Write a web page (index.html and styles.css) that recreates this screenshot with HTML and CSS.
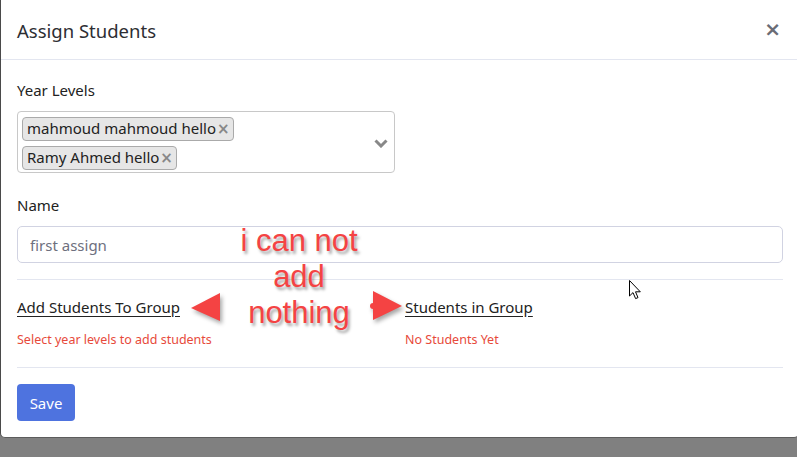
FILE: index.html
```html
<!DOCTYPE html>
<html>
<head>
<meta charset="utf-8">
<link rel="stylesheet" href="styles.css">
</head>
<body>
<div class="modal">
  <div class="modal-header">
    <h5 class="modal-title">Assign Students</h5>
    <button class="close" type="button">×</button>
  </div>
  <div class="modal-body">
    <label class="lbl">Year Levels</label>
    <div class="select">
      <div class="tags">
        <span class="tag">mahmoud mahmoud hello<span class="tag-x">×</span></span>
        <span class="tag">Ramy Ahmed hello<span class="tag-x">×</span></span>
      </div>
      <svg class="chev" width="14" height="9" viewBox="0 0 14 9"><polyline points="1.5,1.5 7,7 12.5,1.5" fill="none" stroke="#888" stroke-width="3"/></svg>
    </div>
    <label class="lbl lbl-name">Name</label>
    <input class="input" type="text" placeholder="first assign">
    <hr class="sep sep1">
    <div class="cols">
      <div class="col">
        <a class="col-title">Add Students To Group</a>
        <p class="hint">Select year levels to add students</p>
      </div>
      <div class="col">
        <a class="col-title">Students in Group</a>
        <p class="hint">No Students Yet</p>
      </div>
    </div>
    <hr class="sep sep2">
    <button class="btn" type="button">Save</button>
  </div>
</div>

<div class="note">i can not<br>add<br>nothing</div>
<svg class="arrow arrow-left" width="34" height="32" viewBox="0 0 34 32"><polygon points="2,16 31,1 31,29" fill="#f44343"/></svg>
<svg class="arrow arrow-right" width="40" height="34" viewBox="0 0 40 34"><polygon points="34,17 5,2 5,31" fill="#f44343"/><circle cx="5" cy="17" r="3" fill="#f44343"/></svg>
<svg class="cursor" width="14" height="21" viewBox="0 0 14 21"><path d="M0.5,0.5 L0.5,16 L4,12.6 L6.6,18.6 L9,17.6 L6.5,11.8 L11.3,11.8 Z" fill="#fff" stroke="#000" stroke-width="1" stroke-linejoin="miter"/></svg>
</body>
</html>
```
FILE: styles.css
```css
html, body {
  margin: 0;
  padding: 0;
  overflow: hidden;
}
body {
  background: #808080;
  width: 797px;
  height: 457px;
  position: relative;
  font-family: "Noto Sans", "Open Sans", sans-serif;
  color: #222;
}
.modal {
  width: 798px;
  background: #fff;
  border-left: 1px solid #4a4a4a;
  border-bottom: 1px solid #5c5c5c;
  border-radius: 0 0 5px 5px;
}
.modal-header {
  height: 59px;
  border-bottom: 1px solid #e3e6f0;
  display: flex;
  align-items: center;
  justify-content: space-between;
  padding: 0 16px;
}
.modal-title {
  margin: 2px 0 0 0;
  font-size: 18.5px;
  font-weight: 400;
  color: #2d2e33;
}
.close {
  border: 0;
  background: none;
  padding: 0;
  margin: 0 2px 2px 0;
  font-family: "DejaVu Sans", sans-serif;
  font-size: 20px;
  font-weight: 700;
  line-height: 1;
  color: #6b6c75;
}
.modal-body {
  padding: 18px 16px 16px;
}
.lbl {
  display: block;
  font-size: 15px;
  line-height: 24px;
  margin-bottom: 9px;
}
.lbl-name {
  margin-top: 20px;
}
.select {
  box-sizing: border-box;
  width: 378px;
  height: 62px;
  border: 1px solid #c8c8c8;
  border-radius: 4px;
  display: flex;
  align-items: center;
  justify-content: space-between;
  padding: 0 6px 0 4px;
}
.tags {
  display: flex;
  flex-direction: column;
  align-items: flex-start;
  gap: 5px;
  padding-top: 3px;
}
.tag {
  background: #e6e6e6;
  border: 1px solid #aaa;
  border-radius: 4px;
  font-size: 15px;
  line-height: 21px;
  padding: 0 3px 0 4px;
  color: #222;
  white-space: nowrap;
}
.tag-x {
  font-family: "DejaVu Sans", sans-serif;
  font-weight: 700;
  color: #888;
  font-size: 15px;
  margin-left: 1px;
}
.chev {
  display: block;
  margin-top: 2px;
}
.input {
  display: block;
  box-sizing: border-box;
  width: 766px;
  height: 37px;
  border: 1px solid #d1d3e2;
  border-radius: 5px;
  padding: 0 12px;
  font-family: inherit;
  font-size: 15px;
  color: #333;
  margin: 0;
}
.input::placeholder {
  color: #6e707e;
}
.sep {
  border: 0;
  border-top: 1px solid #e3e6f0;
  margin: 0;
}
.sep1 {
  margin-top: 16px;
}
.cols {
  display: grid;
  grid-template-columns: 388px 1fr;
  padding-top: 15px;
}
.col-title {
  display: inline-block;
  font-size: 15px;
  line-height: 24px;
  color: #222;
  text-decoration: underline;
  text-underline-offset: 3px;
}
.hint {
  margin: 12px 0 0;
  font-size: 12.5px;
  line-height: 18px;
  color: #e74a3b;
}
.sep2 {
  margin-top: 18px;
}
.btn {
  display: block;
  margin-top: 16px;
  width: 58px;
  height: 37px;
  border: 0;
  border-radius: 4px;
  background: #4e73df;
  color: #fff;
  font-family: inherit;
  font-size: 15px;
  padding: 0;
}
.note {
  position: absolute;
  left: 229px;
  top: 223px;
  width: 140px;
  text-align: center;
  font-family: "Liberation Sans", Arial, sans-serif;
  font-size: 31px;
  line-height: 36px;
  color: #f44343;
  text-shadow: 2px 3px 3px rgba(0, 0, 0, 0.35);
}
.arrow {
  position: absolute;
  filter: drop-shadow(2px 3px 2px rgba(0, 0, 0, 0.35));
}
.arrow-left {
  left: 189px;
  top: 292px;
}
.arrow-right {
  left: 368px;
  top: 289px;
}
.cursor {
  position: absolute;
  left: 629px;
  top: 280px;
}
```
